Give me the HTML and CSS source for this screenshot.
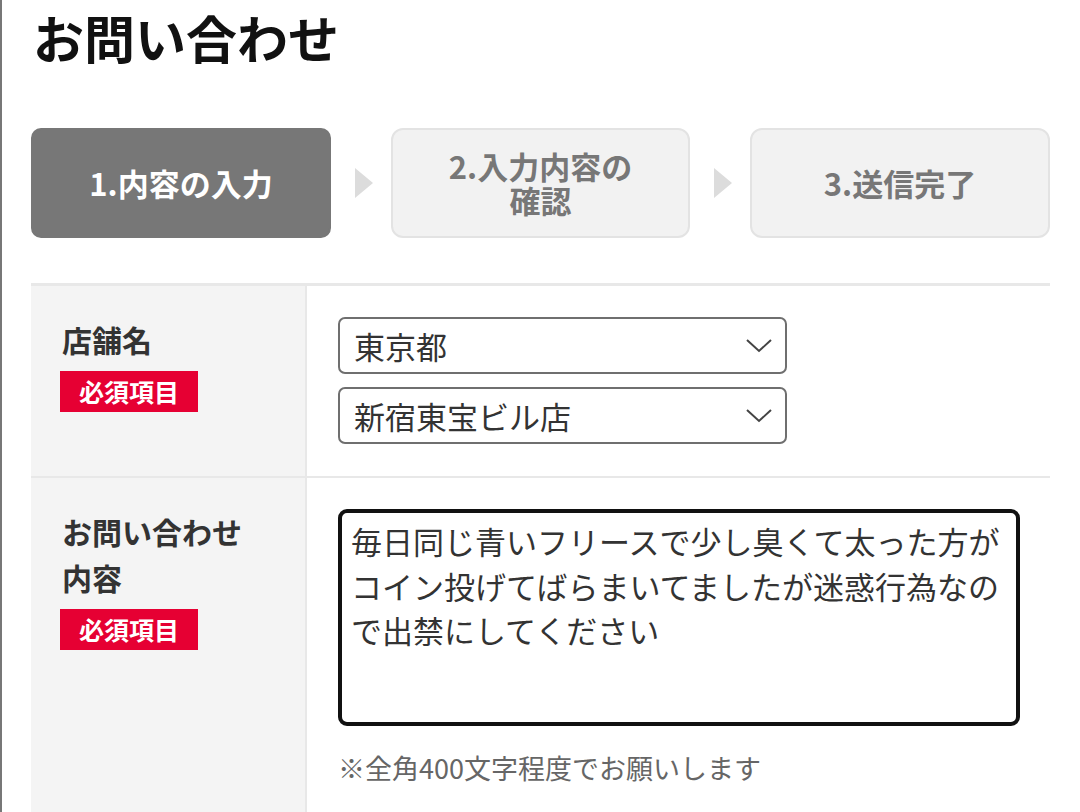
FILE: index.html
```html
<!DOCTYPE html>
<html lang="ja">
<head>
<meta charset="utf-8">
<title>お問い合わせ</title>
<link rel="stylesheet" href="styles.css">
</head>
<body>
<div class="page">
  <h1 class="title">お問い合わせ</h1>
  <ol class="steps">
    <li class="step current">1.内容の入力</li>
    <li class="arrow"></li>
    <li class="step">2.入力内容の確認</li>
    <li class="arrow"></li>
    <li class="step">3.送信完了</li>
  </ol>
  <div class="form">
    <div class="row">
      <div class="label">
        <p class="label-text">店舗名</p>
        <span class="badge">必須項目</span>
      </div>
      <div class="field">
        <div class="select">
          <span>東京都</span>
          <svg class="chev" width="26" height="14" viewBox="0 0 26 14"><path d="M1 1 L13 12 L25 1" fill="none" stroke="#444" stroke-width="2"/></svg>
        </div>
        <div class="select">
          <span>新宿東宝ビル店</span>
          <svg class="chev" width="26" height="14" viewBox="0 0 26 14"><path d="M1 1 L13 12 L25 1" fill="none" stroke="#444" stroke-width="2"/></svg>
        </div>
      </div>
    </div>
    <div class="row last">
      <div class="label">
        <p class="label-text">お問い合わせ内容</p>
        <span class="badge">必須項目</span>
      </div>
      <div class="field">
        <textarea class="textarea" readonly>毎日同じ青いフリースで少し臭くて太った方がコイン投げてばらまいてましたが迷惑行為なので出禁にしてください</textarea>
        <p class="note">※全角400文字程度でお願いします</p>
      </div>
    </div>
  </div>
</div>
</body>
</html>
```
FILE: styles.css
```css
* { box-sizing: border-box; }
html, body { margin: 0; padding: 0; background: #fff; }
body {
  font-family: "Noto Sans CJK JP", "Noto Sans", sans-serif;
  color: #333;
}
.page {
  border-left: 2px solid #777;
  padding-left: 29px;
  width: 1050px;
  min-height: 812px;
}
.title {
  margin: 0 0 0 2px;
  font-size: 51px;
  line-height: 74px;
  font-weight: 700;
  color: #111;
}
.steps {
  list-style: none;
  margin: 54px 0 0;
  padding: 0;
  display: grid;
  grid-template-columns: 300px 60px 299px 60px 300px;
  height: 110px;
}
.step {
  display: flex;
  align-items: center;
  justify-content: center;
  text-align: center;
  padding: 0 50px;
  font-size: 31px;
  line-height: 34px;
  font-weight: 700;
  color: #777;
  background: #f2f2f2;
  border: 2px solid #e3e3e3;
  border-radius: 12px;
}
.step.current {
  background: #777;
  border-color: #777;
  color: #fff;
  border-radius: 10px;
}
.arrow {
  display: flex;
  align-items: center;
  justify-content: center;
}
.arrow::before {
  content: "";
  display: block;
  margin-left: 6px;
  border-left: 18px solid #dcdcdc;
  border-top: 15px solid transparent;
  border-bottom: 15px solid transparent;
}
.form {
  margin-top: 45px;
  border-top: 3px solid #e8e8e8;
}
.row {
  display: grid;
  grid-template-columns: 276px 1fr;
  border-bottom: 2px solid #e8e8e8;
}
.row.last { border-bottom: none; }
.label {
  background: #f4f4f4;
  border-right: 2px solid #e8e8e8;
  padding: 30px 50px 30px 29px;
}
.label-text {
  margin: 0 0 0 2px;
  font-size: 30px;
  line-height: 46px;
  font-weight: 700;
  color: #333;
}
.badge {
  display: inline-block;
  margin-top: 9px;
  height: 41px;
  line-height: 41px;
  padding: 0 19px;
  background: #e60033;
  color: #fff;
  font-size: 25px;
  font-weight: 700;
}
.field {
  padding: 31px 31px 32px 31px;
}
.select {
  width: 449px;
  height: 57px;
  border: 2px solid #6f6f6f;
  border-radius: 7px;
  display: flex;
  align-items: center;
  justify-content: space-between;
  padding: 0 13px 0 14px;
  font-size: 31px;
  color: #333;
  background: #fff;
}
.select + .select { margin-top: 13px; }
.chev { display: block; }
.textarea {
  display: block;
  width: 682px;
  height: 217px;
  border: 4px solid #111;
  border-radius: 9px;
  padding: 6px 10px 6px 9px;
  font-family: "Noto Sans CJK JP", "Noto Sans", sans-serif;
  font-size: 31px;
  line-height: 44.5px;
  color: #333;
  resize: none;
  outline: none;
  overflow: hidden;
}
.note {
  margin: 22px 0 0 0;
  font-size: 27px;
  line-height: 40px;
  color: #666;
}
```
